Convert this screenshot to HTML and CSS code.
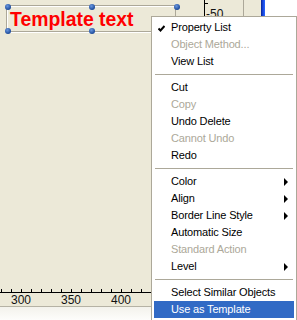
FILE: index.html
```html
<!DOCTYPE html>
<html lang="en">
<head>
  <meta charset="UTF-8">
  <meta name="viewport" content="width=device-width, initial-scale=1.0">
  <title>Form Editor - context menu</title>
  <link rel="stylesheet" href="styles.css">
</head>
<body>
  <div class="screen">
    <div class="editor">
      <div class="canvas">
        <div class="tpl-box"><span class="tpl-text">Template text</span></div>
        <span class="handle h-tl"></span>
        <span class="handle h-tm"></span>
        <span class="handle h-tr"></span>
        <span class="handle h-bl"></span>
        <span class="handle h-bm"></span>
      </div>
      <div class="hruler">
        <div class="ticks"></div>
        <div class="labels">
          <span>300</span><span>350</span><span>400</span>
        </div>
      </div>
      <div class="hscroll"></div>
    </div>
    <div class="vruler"><span class="vr-label">-50</span></div>
    <div class="gutter"></div>
    <div class="bluebar"></div>
    <div class="sidepane"></div>

    <ul class="menu">
      <li class="item checked">
        <svg class="check" width="7" height="7" viewBox="0 0 7 7"><polyline points="0.5,3.5 2.5,5.5 6.5,1" fill="none" stroke="#000" stroke-width="2"/></svg>
        Property List
      </li>
      <li class="item disabled">Object Method...</li>
      <li class="item">View List</li>
      <li class="sep"></li>
      <li class="item">Cut</li>
      <li class="item disabled">Copy</li>
      <li class="item">Undo Delete</li>
      <li class="item disabled">Cannot Undo</li>
      <li class="item">Redo</li>
      <li class="sep"></li>
      <li class="item sub">Color</li>
      <li class="item sub">Align</li>
      <li class="item sub">Border Line Style</li>
      <li class="item">Automatic Size</li>
      <li class="item disabled">Standard Action</li>
      <li class="item sub">Level</li>
      <li class="sep"></li>
      <li class="item">Select Similar Objects</li>
      <li class="item active">Use as Template</li>
    </ul>
  </div>
</body>
</html>
```

FILE: styles.css
```css
body {
  margin: 0;
  background: #ece9d8;
  font-family: "Liberation Sans", Arial, sans-serif;
}
.screen {
  position: relative;
  display: flex;
  width: 297px;
  height: 320px;
  overflow: hidden;
  background: #ece9d8;
}

/* editor area */
.editor {
  width: 204px;
  display: flex;
  flex-direction: column;
}
.canvas {
  position: relative;
  height: 289px;
}
.tpl-box {
  position: absolute;
  left: 6px;
  top: 5px;
  width: 170px;
  height: 27px;
  padding: 1px 0 0 3px;
  box-sizing: border-box;
  border: 1px solid #aca899;
  box-shadow: 0 1px 0 #fff, inset 1px 1px 0 #fff;
}
.tpl-text {
  color: #f00;
  font-weight: bold;
  font-size: 19.4px;
  line-height: 24px;
  white-space: nowrap;
}
.handle {
  position: absolute;
  width: 6px;
  height: 6px;
  border-radius: 50%;
  background: radial-gradient(circle at 40% 35%, #6a98e0, #1c4a9a 70%);
}
.h-tl { left: 5px; top: 4px; }
.h-tm { left: 89px; top: 4px; }
.h-tr { left: 174px; top: 4px; }
.h-bl { left: 5px; top: 28px; }
.h-bm { left: 89px; top: 28px; }

.hruler {
  display: flex;
  flex-direction: column;
}
.ticks {
  height: 3px;
  border-bottom: 1px solid #000;
  background: repeating-linear-gradient(to right, #000 0 1px, transparent 1px 10px);
  background-position: 1px 0;
}
.labels {
  display: flex;
  height: 13px;
  margin-left: -4px;
  border-bottom: 1px solid #b5b2a4;
  font-size: 12px;
  line-height: 15px;
  color: #111;
}
.labels span {
  flex: 0 0 50px;
  text-align: center;
}
.hscroll {
  flex: 1;
  background: linear-gradient(#f3f2ec, #fdfdfb);
}

/* right side panes */
.vruler {
  width: 38px;
  border-left: 1px solid #000;
  border-right: 1px solid #aca899;
  background: linear-gradient(#000, #000) 0 3px / 3px 1px no-repeat, #ece9d8;
}
.vr-label {
  display: block;
  margin: 7px 0 0 1px;
  font-size: 12px;
  line-height: 14px;
  color: #111;
}
.gutter {
  width: 17px;
}
.bluebar {
  width: 4px;
  background: linear-gradient(to right, #0a2390, #1848e0, #2a66ff);
}
.sidepane {
  flex: 1;
  background: #fff;
}

/* context menu */
.menu {
  position: absolute;
  left: 151px;
  top: 16px;
  width: 146px;
  box-sizing: border-box;
  margin: 0;
  padding: 2px;
  list-style: none;
  background: #fff;
  border: 1px solid #aca899;
  font-size: 11px;
  letter-spacing: -0.15px;
  color: #000;
}
.item {
  position: relative;
  height: 17px;
  line-height: 17px;
  padding-left: 17px;
  white-space: nowrap;
}
.item.disabled {
  color: #aca899;
}
.item.active {
  background: #316ac5;
  color: #fff;
}
.check {
  position: absolute;
  left: 4px;
  top: 6px;
}
.item.sub::after {
  content: "";
  position: absolute;
  left: 130px;
  top: 5px;
  border-left: 4px solid #000;
  border-top: 4px solid transparent;
  border-bottom: 4px solid transparent;
}
.sep {
  height: 9px;
  margin: 0 1px;
  background: linear-gradient(#aca899, #aca899) 0 4px / 100% 1px no-repeat;
}
```
